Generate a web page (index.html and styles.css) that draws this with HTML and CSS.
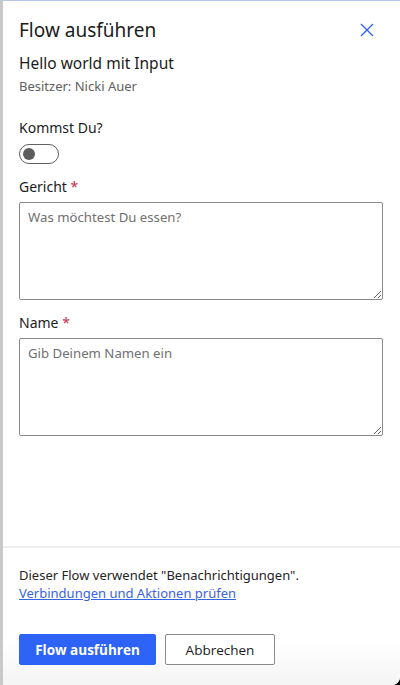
FILE: index.html
```html
<!DOCTYPE html>
<html lang="de">
<head>
<meta charset="utf-8">
<title>Flow ausführen</title>
<link rel="stylesheet" href="styles.css">
</head>
<body>
<div class="frame">
  <div class="stripe"></div>
  <div class="panel">
    <div class="content">
      <div class="header">
        <h1 class="title">Flow ausführen</h1>
        <button class="close" aria-label="Schließen">
          <svg width="14" height="14" viewBox="0 0 14 14"><path d="M1 1 L13 13 M13 1 L1 13" stroke="#2b5ff0" stroke-width="1.3" fill="none"/></svg>
        </button>
      </div>
      <div class="subtitle">Hello world mit Input</div>
      <div class="owner">Besitzer: Nicki Auer</div>

      <div class="label first">Kommst Du?</div>
      <div class="toggle"><span class="knob"></span></div>

      <div class="label">Gericht <span class="req">*</span></div>
      <textarea class="field" placeholder="Was möchtest Du essen?"></textarea>

      <div class="label">Name <span class="req">*</span></div>
      <textarea class="field" placeholder="Gib Deinem Namen ein"></textarea>
    </div>
    <div class="footer">
      <div class="note">Dieser Flow verwendet "Benachrichtigungen".</div>
      <a class="link" href="#">Verbindungen und Aktionen prüfen</a>
      <div class="actions">
        <button class="btn primary">Flow ausführen</button>
        <button class="btn secondary">Abbrechen</button>
      </div>
    </div>
  </div>
</div>
</body>
</html>
```

FILE: styles.css
```css
* { box-sizing: border-box; }
html, body { margin: 0; padding: 0; }
body {
  width: 400px;
  height: 685px;
  background: #000;
  font-family: "Noto Sans", "Open Sans", Arial, sans-serif;
  color: #242424;
  overflow: hidden;
}
.frame {
  display: flex;
  height: 685px;
  background: #fff;
  border-bottom-right-radius: 8px;
  overflow: hidden;
}
.stripe {
  width: 3px;
  background: #c9c9c9;
  flex: none;
}
.panel {
  flex: 1;
  display: flex;
  flex-direction: column;
  border-top: 1px solid #b7c5ea;
  background: linear-gradient(to bottom, #fff 0, #fff 640px, #f4f4f4 685px);
}
.content {
  flex: 1;
  padding: 15px 17px 0 16px;
  display: flex;
  flex-direction: column;
}
.header {
  display: flex;
  align-items: center;
  justify-content: space-between;
  height: 28px;
}
.title {
  margin: 0;
  font-size: 19px;
  font-weight: 400;
  line-height: 28px;
  color: #1b1b1b;
}
.close {
  border: 0;
  background: none;
  padding: 0;
  width: 14px;
  height: 14px;
  margin-right: 9px;
  display: flex;
}
.subtitle {
  margin-top: 8px;
  font-size: 15.5px;
  line-height: 22px;
  font-weight: 400;
  color: #1b1b1b;
}
.owner {
  margin-top: 2px;
  font-size: 13px;
  line-height: 20px;
  color: #616161;
}
.label {
  margin-top: 13px;
  font-size: 14px;
  line-height: 20px;
  font-weight: 400;
  color: #1b1b1b;
}
.label.first { margin-top: 22px; }
.field + .label { margin-top: 0; }
.req { color: #c4314b; }
.toggle {
  margin-top: 6px;
  width: 40px;
  height: 20px;
  border: 1px solid #616161;
  border-radius: 10px;
  display: flex;
  align-items: center;
  padding-left: 3px;
}
.knob {
  width: 12px;
  height: 12px;
  border-radius: 50%;
  background: #5c5c5c;
}
.field {
  display: block;
  margin-top: 5px;
  width: 100%;
  height: 98px;
  border: 1px solid #8a8a8a;
  border-radius: 2px;
  padding: 4px 8px;
  font-family: inherit;
  font-size: 13.2px;
  line-height: 20px;
  color: #242424;
  resize: vertical;
  margin-bottom: 13px;
  outline: none;
}
.field::placeholder { color: #707070; }
.footer {
  border-top: 2px solid #eeeeee;
  padding: 18px 17px 20px 16px;
}
.note {
  font-size: 13px;
  line-height: 18px;
  color: #242424;
}
.link {
  display: block;
  font-size: 13px;
  line-height: 18px;
  color: #3a63e0;
  text-decoration: underline;
}
.actions {
  margin-top: 32px;
  display: flex;
  gap: 9px;
}
.btn {
  height: 31px;
  border-radius: 2px;
  font-family: "Open Sans", "Noto Sans", Arial, sans-serif;
  font-size: 13.5px;
  padding: 0;
}
.primary {
  width: 137px;
  background: #2d63f6;
  color: #fff;
  border: 1px solid #2d63f6;
  font-weight: 700;
}
.secondary {
  width: 110px;
  background: #fff;
  color: #1b1b1b;
  border: 1px solid #8a8a8a;
  font-weight: 500;
}
```
